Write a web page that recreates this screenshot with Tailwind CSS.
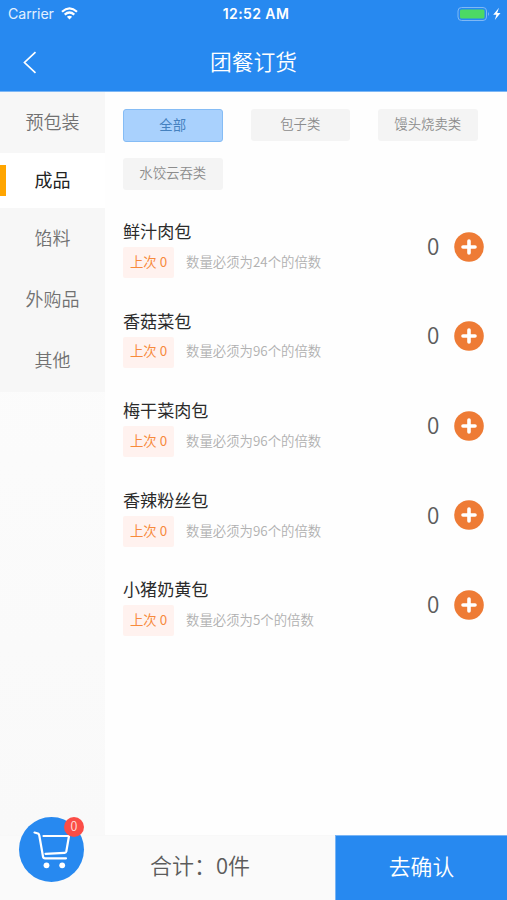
<!DOCTYPE html>
<html lang="zh-CN">
<head>
<meta charset="utf-8">
<meta name="viewport" content="width=device-width, initial-scale=1">
<title>团餐订货</title>
<script src="https://cdn.jsdelivr.net/npm/@tailwindcss/browser@4"></script>
</head>
<body class="bg-white">
<div class="relative flex h-[900px] w-[507px] flex-col overflow-hidden bg-[#fefefe] font-['Noto_Sans_CJK_SC',sans-serif] leading-none font-[350]">
  <header class="h-[92px] shrink-0 border-b border-[#7db7f5] bg-[#2789f0] text-white">
    <div class="grid h-7 grid-cols-3 items-center pr-[5px] pl-2 font-['Inter',sans-serif]">
      <div class="flex items-center gap-[7px] font-normal text-[#e2f0ff]"><span class="pt-px text-[14.2px] tracking-[-0.1px]">Carrier</span>
        <svg class="h-[13px] w-[17px]" viewBox="0 0 17 13" fill="none" stroke="#fff" stroke-width="2.2"><path d="M1 4.7Q8.500-2 16 4.700M3.700 7.600Q8.500 3.400 13.300 7.600"/><path d="M8.500 12.400L5.900 9.700Q8.500 7.700 11.100 9.700Z" fill="#fff" stroke="none"/></svg>
      </div>
      <div class="pb-px pl-[2px] text-center text-[14px] font-semibold tracking-[0.4px] whitespace-nowrap">12:52 AM</div>
      <div class="flex items-center justify-end">
        <svg class="h-[14px] w-[45px]" viewBox="0 0 45 14"><rect x="1" y=".5" width="28.500" height="13" rx="3.500" fill="none" stroke="#7fb8f5"/><rect x="3" y="2.500" width="24.500" height="9" rx="1.500" fill="#4cd964"/><path d="M31 5Q33 7 31 9Z" fill="#7fb8f5"/><path d="M42 .8L36.200 7.800H39.400L37.800 13L43.500 5.900H40.200Z" fill="#fff"/></svg>
      </div>
    </div>
    <div class="grid h-[63px] grid-cols-[60px_1fr_60px] items-center pt-[3px]">
      <svg class="mt-px ml-[22px] h-[24px] w-[16px]" viewBox="0 0 16 24" fill="none" stroke="#fff" stroke-width="1.700"><path d="M13.500 2.200L2.500 12.500L13.500 22.800"/></svg>
      <h1 class="pb-px text-center text-[21.8px] font-[350]">团餐订货</h1>
    </div>
  </header>

  <div class="flex min-h-0 flex-1">
    <nav class="flex w-[105px] shrink-0 flex-col bg-gradient-to-b from-[#fdfdfd] to-[#f9f9f9] text-center text-[18px] text-[#717171]">
      <div class="flex h-[61px] items-center justify-center bg-[#f7f7f7] pb-[4px]">预包装</div>
      <div class="flex h-[55px] items-center bg-white text-[#222]"><span class="h-[31px] w-[6px] bg-[#ffa500]"></span><span class="flex-1 pr-[6px] pb-[4px] font-normal">成品</span></div>
      <div class="flex h-[61px] items-center justify-center bg-[#f7f7f7] pb-[4px]">馅料</div>
      <div class="flex h-[61px] items-center justify-center bg-[#f7f7f7] pb-[4px]">外购品</div>
      <div class="flex h-[62px] items-center justify-center bg-[#f7f7f7] pb-[4px]">其他</div>
    </nav>
    <main class="flex-1 pl-[18px]">
      <div class="grid grid-cols-[99.500px_99.500px_99.500px] gap-x-[28px] gap-y-[16px] pt-[17px] text-[13.4px] text-[#8c8c8c]">
        <div class="flex h-[33px] items-center justify-center rounded-[3px] border border-[#85bcf5] bg-[#a9d1fd] pb-[2px] font-normal text-[#4581bf]">全部</div>
        <div class="flex h-[32px] items-center justify-center rounded-[3px] bg-[#f4f4f4] pb-[2px]">包子类</div>
        <div class="flex h-[32px] items-center justify-center rounded-[3px] bg-[#f4f4f4] pb-[2px]">馒头烧卖类</div>
        <div class="flex h-[32px] items-center justify-center rounded-[3px] bg-[#f4f4f4] pb-[2px]">水饺云吞类</div>
      </div>
      <ul id="items" class="pt-[31px]"></ul>
    </main>
  </div>

  <footer class="flex h-[65px] shrink-0 bg-[#fafafa]">
    <div class="flex w-[335px] items-center border-t border-[#f8f8f8] pb-[8px] pl-[150px] text-[22px] text-[#5c5c5c]">合计：0件</div>
    <div class="flex flex-1 items-center justify-center border-t border-l border-[#79b5f5] bg-[#2789f0] pb-[4px] text-[21.8px] text-white">去确认</div>
  </footer>

  <div class="absolute top-[817px] left-[19px] size-[65px] rounded-full bg-[#2789f0]">
    <svg class="size-full" viewBox="0 0 65 65" fill="none" stroke="#fff" stroke-width="2.200" stroke-linecap="round" stroke-linejoin="round"><path d="M15.500 15.500L19 16.500Q20 17 20.300 18.500L24 39.500Q24.300 41.300 26 41.300H47M24.500 19H50L47.300 34.500Q47 35.700 45.500 35.800L26.500 36.800"/><circle cx="27.500" cy="48.300" r="2.900" fill="#fff" stroke="none"/><circle cx="43.200" cy="48.300" r="2.900" fill="#fff" stroke="none"/></svg>
    <span class="absolute top-0 left-[45px] flex size-[20px] items-center justify-center rounded-full bg-[#fb4d47] pb-px text-[12.5px] text-[#ffe1df]">0</span>
  </div>
</div>
<template id="row">
  <li class="flex h-[89.6px]">
    <div class="w-[290px]">
      <div data-name class="pt-px text-[17.1px] font-normal text-[#2b2b2b]"></div>
      <div class="mt-[8px] flex h-[31px] items-center gap-[12px] text-[13.4px]">
        <span class="flex h-[31px] w-[51px] items-center justify-center rounded-[2px] bg-[#fff2ef] pb-[2px] font-normal whitespace-pre text-[#f78a3c]">上次 0</span>
        <span data-hint class="pb-[2px] text-[#b0b0b0]"></span>
      </div>
    </div>
    <div class="flex h-[51px] items-center">
      <span class="w-[41px] pb-[3px] pl-[14px] text-[22.500px] text-[#5c5c5c]">0</span>
      <svg class="size-[30px]" viewBox="0 0 30 30"><circle cx="15" cy="15" r="14.800" fill="#ee7b35"/><path d="M15 9V21M9 15H21" stroke="#fff" stroke-width="3.600" stroke-linecap="round"/></svg>
    </div>
  </li>
</template>
<script>
const products = [['鲜汁肉包', 24], ['香菇菜包', 96], ['梅干菜肉包', 96], ['香辣粉丝包', 96], ['小猪奶黄包', 5]];
const list = document.getElementById('items');
for (const [name, multiple] of products) {
  const row = document.getElementById('row').content.cloneNode(true);
  row.querySelector('[data-name]').textContent = name;
  row.querySelector('[data-hint]').textContent = `数量必须为${multiple}个的倍数`;
  list.append(row);
}
</script>
</body>
</html>
